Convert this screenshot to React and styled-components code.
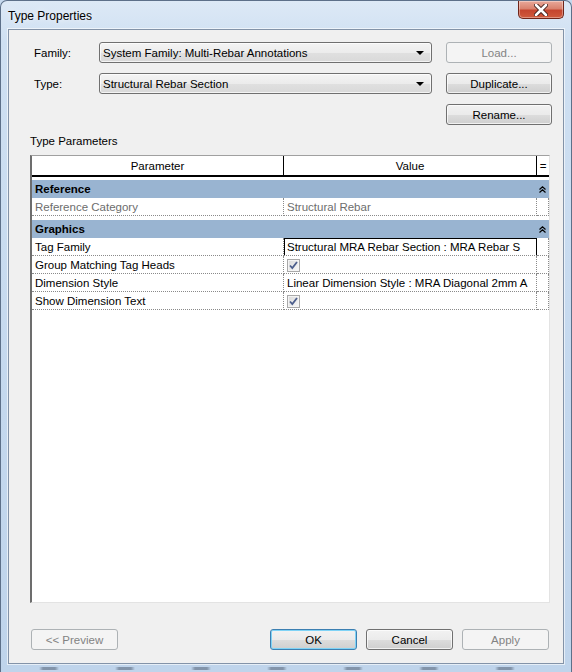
import React from 'react';
import styled, { createGlobalStyle } from 'styled-components';

const GlobalStyle = createGlobalStyle`
  html, body {
    margin: 0;
    padding: 0;
    background: #c6d9ee;
    overflow: hidden;
  }
  * { box-sizing: border-box; }
`;

const font = `"Liberation Sans", Arial, sans-serif`;

const Frame = styled.div`
  width: 572px;
  height: 672px;
  display: flex;
  flex-direction: column;
  padding: 0 7px 8px 7px;
  border: 1px solid #5d7089;
  border-bottom: none;
  border-radius: 7px 7px 0 0;
  font-family: ${font};
  font-size: 11.5px;
  color: #000;
  background:
    repeating-linear-gradient(90deg, rgba(255,255,255,0) 0 38px, rgba(40,52,72,0.4) 42px 54px, rgba(255,255,255,0) 58px 76px) left bottom 2px / 100% 3px no-repeat,
    linear-gradient(180deg, #dde9f6 0%, #cfe0f2 6%, #c4d8ee 60%, #bfd4eb 100%);
`;

const TitleBar = styled.div`
  height: 28px;
  display: flex;
  justify-content: space-between;
  align-items: flex-start;
`;

const Title = styled.div`
  margin-top: 8px;
  font-size: 12px;
  line-height: 14px;
  color: #000;
  text-shadow: 0 0 6px rgba(255,255,255,0.9);
`;

const CloseButton = styled.div`
  width: 46px;
  height: 18px;
  display: flex;
  align-items: center;
  justify-content: center;
  border: 1px solid #6f2519;
  border-top: none;
  border-radius: 0 0 5px 5px;
  background: linear-gradient(180deg, #e9a99a 0%, #d9826e 45%, #c5452e 55%, #cf5a3c 100%);
  box-shadow: inset 0 0 0 1px rgba(255,255,255,0.35);
`;

const Client = styled.div`
  flex: 1;
  display: flex;
  flex-direction: column;
  background: #f0f0f0;
  border: 1px solid #8393a8;
  box-shadow: 0 0 0 1px rgba(255,255,255,0.6);
`;

const TopGrid = styled.div`
  display: grid;
  grid-template-columns: 52px 333px 106px;
  grid-template-rows: 21px 21px 21px;
  column-gap: 14px;
  row-gap: 10px;
  padding: 12px 0 0 24px;
`;

const Label = styled.div`
  display: flex;
  align-items: center;
  padding-left: 1px;
`;

const Select = styled.div`
  display: flex;
  align-items: center;
  justify-content: space-between;
  padding: 0 7px 0 3px;
  border: 1px solid #707070;
  border-radius: 3px;
  background: linear-gradient(180deg, #f4f4f4 0%, #ececec 50%, #e0e0e0 51%, #d9d9d9 100%);
  box-shadow: inset 0 0 0 1px rgba(255,255,255,0.7);
`;

const Arrow = styled.span`
  width: 0;
  height: 0;
  border-left: 4px solid transparent;
  border-right: 4px solid transparent;
  border-top: 4px solid #000;
`;

const Button = styled.div`
  grid-column: ${p => p.col || 'auto'};
  width: ${p => p.w || 'auto'};
  height: 21px;
  display: flex;
  align-items: center;
  justify-content: center;
  border-radius: 3px;
  border: 1px solid ${p => (p.disabled ? '#adb2b5' : p.primary ? '#3c7fb1' : '#707070')};
  color: ${p => (p.disabled ? '#838383' : '#000')};
  background: ${p =>
    p.disabled
      ? '#f4f4f4'
      : 'linear-gradient(180deg, #f2f2f2 0%, #ebebeb 50%, #dddddd 51%, #cfcfcf 100%)'};
  box-shadow: ${p =>
    p.primary
      ? 'inset 0 0 0 1px #7fd3f6'
      : p.disabled
      ? 'none'
      : 'inset 0 0 0 1px rgba(255,255,255,0.7)'};
`;

const SectionLabel = styled.div`
  margin: 9px 0 0 21px;
  line-height: 14px;
`;

const Table = styled.div`
  margin: 7px 0 0 21px;
  width: 520px;
  height: 448px;
  background: #fff;
  border-top: 1px solid #a0a0a0;
  border-left: 2px solid #6d6d6d;
  border-right: 1px solid #e3e3e3;
  border-bottom: 1px solid #e3e3e3;
  display: flex;
  flex-direction: column;
`;

const Row = styled.div`
  display: grid;
  grid-template-columns: 252px 253px 12px;
  height: ${p => p.h || 18}px;
  margin-top: ${p => p.gap || 0}px;
  background: ${p => (p.group ? '#99b4d1' : '#fff')};
`;

const HeadCell = styled.div`
  display: flex;
  align-items: center;
  justify-content: center;
  border-bottom: 2px solid #000;
  border-right: ${p => (p.last ? 'none' : '1px solid #000')};
`;

const GroupTitle = styled.div`
  grid-column: 1 / 3;
  display: flex;
  align-items: center;
  padding-left: 3px;
  font-weight: bold;
`;

const GroupToggle = styled.div`
  display: flex;
  align-items: center;
  justify-content: center;
  padding-right: 2px;
`;

const Cell = styled.div`
  display: flex;
  align-items: center;
  padding-left: 3px;
  overflow: hidden;
  white-space: nowrap;
  color: ${p => (p.muted ? '#6d6d6d' : '#000')};
  border-bottom: 1px dotted #8a8a8a;
  border-right: ${p => (p.edit ? 'none' : '1px dotted #8a8a8a')};
  padding: ${p => (p.edit ? '0' : '0 0 0 3px')};
`;

const EditBox = styled.div`
  flex: 1;
  display: flex;
  align-items: center;
  padding-left: 2px;
  height: 18px;
  border: 1px solid #000;
  overflow: hidden;
  white-space: nowrap;
`;

const Footer = styled.div`
  display: flex;
  align-items: center;
  margin-top: 26px;
  padding: 0 14px 0 22px;
  gap: 9px;
`;

const Spacer = styled.div`
  flex: 1;
`;

const CloseIcon = () => (
  <svg width="14" height="12" viewBox="0 0 14 12">
    <path d="M2 1 L12 11 M12 1 L2 11" stroke="#3a1a16" strokeWidth="4.4" strokeLinecap="round" />
    <path d="M2 1 L12 11 M12 1 L2 11" stroke="#fff" strokeWidth="2.6" strokeLinecap="round" />
  </svg>
);

const Chevrons = () => (
  <svg width="7" height="7" viewBox="0 0 7 7">
    <path d="M0.5 3.5 L3.5 0.8 L6.5 3.5 M0.5 6.5 L3.5 3.8 L6.5 6.5" fill="none" stroke="#000" strokeWidth="1.2" />
  </svg>
);

const Check = () => (
  <svg width="13" height="13" viewBox="0 0 13 13" style={{ marginTop: 1 }}>
    <defs>
      <linearGradient id="cbg" x1="0" y1="0" x2="1" y2="1">
        <stop offset="0" stopColor="#dcdcdc" />
        <stop offset="1" stopColor="#f6f6f6" />
      </linearGradient>
    </defs>
    <rect x="0.5" y="0.5" width="12" height="12" fill="#f4f4f4" stroke="#a9a9a9" />
    <rect x="2" y="2" width="9" height="9" fill="url(#cbg)" />
    <path d="M3 6.5 L5.3 9 L10 3" fill="none" stroke="#4c5e8c" strokeWidth="1.8" />
  </svg>
);

const DataRow = ({ name, value, muted, checked, editing }) => (
  <Row>
    <Cell muted={muted}>{name}</Cell>
    {editing ? (
      <Cell edit>
        <EditBox>{value}</EditBox>
      </Cell>
    ) : (
      <Cell muted={muted}>{checked ? <Check /> : value}</Cell>
    )}
    <Cell />
  </Row>
);

const App = () => (
  <>
    <GlobalStyle />
    <Frame>
      <TitleBar>
        <Title>Type Properties</Title>
        <CloseButton>
          <CloseIcon />
        </CloseButton>
      </TitleBar>
      <Client>
        <TopGrid>
          <Label>Family:</Label>
          <Select>
            System Family: Multi-Rebar Annotations
            <Arrow />
          </Select>
          <Button disabled>Load...</Button>
          <Label>Type:</Label>
          <Select>
            Structural Rebar Section
            <Arrow />
          </Select>
          <Button>Duplicate...</Button>
          <Button col={3}>Rename...</Button>
        </TopGrid>

        <SectionLabel>Type Parameters</SectionLabel>

        <Table>
          <Row h={21}>
            <HeadCell>Parameter</HeadCell>
            <HeadCell>Value</HeadCell>
            <HeadCell last>=</HeadCell>
          </Row>

          <Row group gap={3}>
            <GroupTitle>Reference</GroupTitle>
            <GroupToggle>
              <Chevrons />
            </GroupToggle>
          </Row>
          <DataRow name="Reference Category" value="Structural Rebar" muted />

          <Row group gap={4}>
            <GroupTitle>Graphics</GroupTitle>
            <GroupToggle>
              <Chevrons />
            </GroupToggle>
          </Row>
          <DataRow name="Tag Family" value="Structural MRA Rebar Section : MRA Rebar S" editing />
          <DataRow name="Group Matching Tag Heads" checked />
          <DataRow name="Dimension Style" value="Linear Dimension Style : MRA Diagonal 2mm A" />
          <DataRow name="Show Dimension Text" checked />
        </Table>

        <Footer>
          <Button disabled w="87px">&lt;&lt; Preview</Button>
          <Spacer />
          <Button primary w="87px">OK</Button>
          <Button w="87px">Cancel</Button>
          <Button disabled w="87px">Apply</Button>
        </Footer>
      </Client>
    </Frame>
  </>
);

export default App;
